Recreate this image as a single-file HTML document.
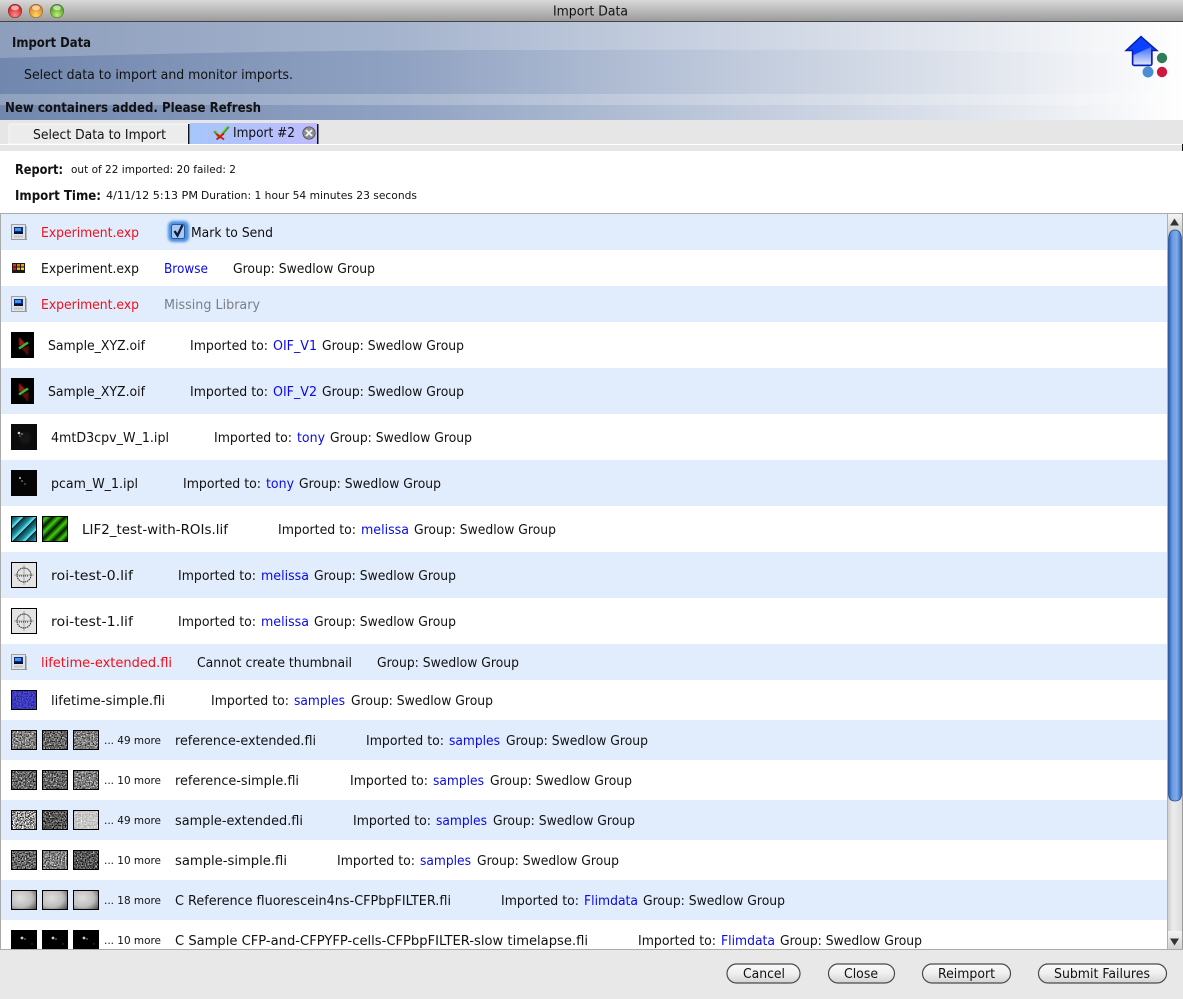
<!DOCTYPE html>
<html><head><meta charset="utf-8"><title>Import Data</title>
<style>
html,body{margin:0;padding:0;background:#fff;width:1183px;height:999px;overflow:hidden}
svg{display:block}
text{font-family:"DejaVu Sans","Liberation Sans",sans-serif;font-size:13px;fill:#111;}
.b{font-weight:bold}
.s{font-size:11px}
.r{fill:#f0101c}.l{fill:#0a0ae6}.g{fill:#7b7f86}
</style></head><body>
<svg width="1183" height="999" viewBox="0 0 1183 999" xmlns="http://www.w3.org/2000/svg">
<defs>
<linearGradient id="tb" x1="0" y1="0" x2="0" y2="1"><stop offset="0" stop-color="#d8d8d8"/><stop offset="1" stop-color="#9c9c9c"/></linearGradient>
<linearGradient id="hd"><stop offset="0" stop-color="#7187ad"/><stop offset=".34" stop-color="#90a2c2"/><stop offset=".6" stop-color="#bcc7da"/><stop offset=".85" stop-color="#e4e8ef"/><stop offset="1" stop-color="#ffffff"/></linearGradient>
<linearGradient id="tab"><stop offset="0" stop-color="#a6c6fb"/><stop offset="1" stop-color="#bfbcfc"/></linearGradient>
<linearGradient id="sb" x1="0" x2="1" y1="0" y2="0"><stop offset="0" stop-color="#2558b0"/><stop offset=".3" stop-color="#6a9ce0"/><stop offset=".65" stop-color="#80ace6"/><stop offset="1" stop-color="#2a60b8"/></linearGradient>
<linearGradient id="tr" x1="0" x2="1" y1="0" y2="0"><stop offset="0" stop-color="#c8c8c8"/><stop offset=".4" stop-color="#ececec"/><stop offset="1" stop-color="#dcdcdc"/></linearGradient>
<linearGradient id="btn" x1="0" y1="0" x2="0" y2="1"><stop offset="0" stop-color="#fafafa"/><stop offset=".5" stop-color="#efefef"/><stop offset="1" stop-color="#d2d2d2"/></linearGradient>
<linearGradient id="ho" x1="0" y1="0" x2="0" y2="1"><stop offset="0" stop-color="#3f6cf5"/><stop offset="1" stop-color="#dbe4ff"/></linearGradient>
<linearGradient id="ub" x1="0" y1="0" x2="0" y2="1"><stop offset="0" stop-color="#f4f4f4"/><stop offset="1" stop-color="#d2d2d2"/></linearGradient>
<radialGradient id="rd" cy=".8" r=".75"><stop offset="0" stop-color="#ff8a8a"/><stop offset="1" stop-color="#d0101a"/></radialGradient>
<radialGradient id="yl" cy=".8" r=".75"><stop offset="0" stop-color="#ffd868"/><stop offset="1" stop-color="#d87010"/></radialGradient>
<radialGradient id="gr" cy=".8" r=".75"><stop offset="0" stop-color="#bcf078"/><stop offset="1" stop-color="#409018"/></radialGradient>
<radialGradient id="fl" cx=".36" cy=".4" r=".85"><stop offset="0" stop-color="#dedede"/><stop offset=".55" stop-color="#bebebe"/><stop offset="1" stop-color="#484848"/></radialGradient>
<linearGradient id="gn" gradientUnits="userSpaceOnUse" x1="0" y1="0" x2="3" y2="3" spreadMethod="reflect"><stop offset="0" stop-color="#021a00"/><stop offset="1" stop-color="#3fcf08"/></linearGradient>
<linearGradient id="cn" gradientUnits="userSpaceOnUse" x1="0" y1="0" x2="6.500" y2="6.500" spreadMethod="repeat"><stop offset="0" stop-color="#05252c"/><stop offset=".7" stop-color="#1f95a5"/><stop offset="1" stop-color="#7cf4ff"/></linearGradient>
<filter id="n1" x="0" y="0" width="100%" height="100%" color-interpolation-filters="sRGB"><feTurbulence type="fractalNoise" baseFrequency=".75" numOctaves="1" seed="3"/><feColorMatrix values="1.200 1.200 0 0 -.7 1.200 1.200 0 0 -.7 1.200 1.200 0 0 -.7 0 0 0 0 1"/></filter>
<filter id="n2" x="0" y="0" width="100%" height="100%" color-interpolation-filters="sRGB"><feTurbulence type="fractalNoise" baseFrequency=".75" numOctaves="1" seed="9"/><feColorMatrix values="1.200 1.200 0 0 -.8 1.200 1.200 0 0 -.8 1.200 1.200 0 0 -.8 0 0 0 0 1"/></filter>
<filter id="n3" x="0" y="0" width="100%" height="100%" color-interpolation-filters="sRGB"><feTurbulence type="fractalNoise" baseFrequency=".75" numOctaves="1" seed="14"/><feColorMatrix values="2.200 2.200 0 0 -1.600 2.200 2.200 0 0 -1.600 2.200 2.200 0 0 -1.600 0 0 0 0 1"/></filter>
<filter id="n4" x="0" y="0" width="100%" height="100%" color-interpolation-filters="sRGB"><feTurbulence type="fractalNoise" baseFrequency=".75" numOctaves="1" seed="21"/><feColorMatrix values="1.200 1.200 0 0 -.87 1.200 1.200 0 0 -.87 1.200 1.200 0 0 -.87 0 0 0 0 1"/></filter>
<filter id="n5" x="0" y="0" width="100%" height="100%" color-interpolation-filters="sRGB"><feTurbulence type="fractalNoise" baseFrequency=".75" numOctaves="1" seed="33"/><feColorMatrix values=".5 .5 0 0 .28 .5 .5 0 0 .28 .5 .5 0 0 .28 0 0 0 0 1"/></filter>
<filter id="nb" x="0" y="0" width="100%" height="100%" color-interpolation-filters="sRGB"><feTurbulence type="fractalNoise" baseFrequency=".8" numOctaves="1" seed="5"/><feColorMatrix values=".7 0 0 0 -.12 .7 0 0 0 -.12 0 .9 0 0 .3 0 0 0 0 1"/></filter>
<filter id="bl" x="-40%" y="-40%" width="180%" height="180%"><feGaussianBlur stdDeviation="1.300"/></filter>
<filter id="bs" x="-30%" y="-30%" width="160%" height="160%"><feGaussianBlur stdDeviation=".6"/></filter>
<symbol id="doc" width="16" height="16" viewBox="0 0 16 16"><rect x=".5" y=".5" width="14" height="15" fill="#e0e3e8" stroke="#a0a0a0"/><rect x="14" y="2" width="1.500" height="14" fill="#8c8c8c"/><rect x="1" y="15" width="15" height="1" fill="#999"/><rect x="3" y="3" width="9" height="7" fill="#0b2a88"/><rect x="4" y="4" width="6" height="3" fill="#3d9ae8"/><rect x="3" y="8" width="9" height="2" fill="#0a1030"/><rect x="3" y="11.500" width="9" height="2" fill="#c4c8cc"/></symbol>
<symbol id="xyz" width="23" height="26" viewBox="0 0 23 26"><rect width="23" height="26" fill="#000"/><path d="M8 5L15 12L8 14Z" fill="#a01212" filter="url(#bs)"/><path d="M10 16L18 14L17 24Z" fill="#5a0808" filter="url(#bs)"/><path d="M8 16.500L17 10.500" stroke="#30c030" stroke-width="2.400"/></symbol>
<symbol id="roi" width="26" height="26" viewBox="0 0 26 26"><rect x=".5" y=".5" width="25" height="25" fill="#e4e4e4" stroke="#000"/><path d="M13 3V23M3 13H23" stroke="#888" stroke-width=".7"/><circle cx="13" cy="13" r="7" fill="none" stroke="#222" stroke-dasharray="1.500 .7"/><path d="M8 14H18" stroke="#333" stroke-dasharray="1 1"/></symbol>
<symbol id="bk" width="26" height="20" viewBox="0 0 26 20"><rect width="26" height="20" fill="#000"/><circle cx="11" cy="8" r="1.400" fill="#ccc"/><circle cx="14" cy="9" r=".9" fill="#777"/><circle cx="21" cy="14" r=".7" fill="#444"/></symbol>
</defs>

<!-- title bar -->
<rect width="1183" height="21" fill="url(#tb)"/>
<rect y="21" width="1183" height="1" fill="#444"/>
<circle cx="15" cy="11" r="6.700" fill="url(#rd)" stroke="#7a2a2a" stroke-width=".6"/>
<ellipse cx="15" cy="7.800" rx="4" ry="2.400" fill="#fff" opacity=".6"/>
<circle cx="36" cy="11" r="6.700" fill="url(#yl)" stroke="#8a6a30" stroke-width=".6"/>
<ellipse cx="36" cy="7.800" rx="4" ry="2.400" fill="#fff" opacity=".6"/>
<circle cx="57" cy="11" r="6.700" fill="url(#gr)" stroke="#4a7a2a" stroke-width=".6"/>
<ellipse cx="57" cy="7.800" rx="4" ry="2.400" fill="#fff" opacity=".6"/>
<text x="553" y="15.500" textLength="75" lengthAdjust="spacingAndGlyphs">Import Data</text>

<!-- header banner -->
<rect y="22" width="1183" height="98" fill="url(#hd)"/>
<path d="M0 58 C150 54 300 50 520 50 C750 50 950 48 1183 56 V22 H0Z" fill="#fff" opacity=".2"/>
<rect y="94" width="1183" height="11" fill="#fff" opacity=".22"/>
<text class="b" x="12" y="47" textLength="79" lengthAdjust="spacingAndGlyphs">Import Data</text>
<text x="24" y="79" textLength="269" lengthAdjust="spacingAndGlyphs">Select data to import and monitor imports.</text>
<text class="b" x="5" y="112" textLength="256" lengthAdjust="spacingAndGlyphs">New containers added. Please Refresh</text>
<path d="M1141 36.500L1126 50.500H1132.500V63.500Q1132.500 65.500 1134.500 65.500H1150Q1152 65.500 1152 63.500V50.500H1157Z" fill="#0a40ff" stroke="#0a1ca8" stroke-width="1.400"/>
<path d="M1133.500 55L1151 47V64.500H1133.500Z" fill="url(#ho)"/>
<circle cx="1162" cy="58" r="5.200" fill="#2f7d58"/>
<circle cx="1148" cy="72" r="5.500" fill="#4a8ed8"/>
<circle cx="1162" cy="72" r="5.200" fill="#d0183e"/>

<!-- tabs -->
<rect y="120" width="1183" height="31" fill="#e6e6e6"/>
<rect y="144" width="1183" height="1" fill="#fff"/>
<rect x="1182" y="144" width="1" height="7" fill="#111"/>
<path d="M9 144V126Q9 124 11 124H188V144Z" fill="#ececec" stroke="#fafafa" stroke-width=".8"/>
<rect x="188" y="124" width="1.500" height="20" fill="#111"/>
<rect x="190" y="123" width="127" height="21" fill="url(#tab)"/>
<rect x="317" y="124" width="1.500" height="20" fill="#111"/>
<text x="33" y="139" textLength="133" lengthAdjust="spacingAndGlyphs">Select Data to Import</text>
<text x="233" y="137" textLength="62" lengthAdjust="spacingAndGlyphs">Import #2</text>
<path d="M214.500 131L219.500 137L228.500 126.500" fill="none" stroke="#3f9a18" stroke-width="2.800"/>
<path d="M215 130.500L219.500 135.500L228 126" fill="none" stroke="#a8e060" stroke-width=".8"/>
<path d="M216.500 134L224 139.500M224 133.500L216.500 139.500" stroke="#d8141c" stroke-width="1.800"/>
<circle cx="309" cy="133" r="6.200" fill="#8d8d8d" stroke="#444" stroke-width=".7"/>
<path d="M306 130L312 136M312 130L306 136" stroke="#f2f2f2" stroke-width="1.900"/>

<!-- report -->
<text class="b" x="15" y="174" textLength="48" lengthAdjust="spacingAndGlyphs">Report:</text>
<text class="s" x="71" y="173" textLength="165" lengthAdjust="spacingAndGlyphs">out of 22 imported: 20 failed: 2</text>
<text class="b" x="15" y="200" textLength="86" lengthAdjust="spacingAndGlyphs">Import Time:</text>
<text class="s" x="106" y="199" textLength="92" lengthAdjust="spacingAndGlyphs">4/11/12 5:13 PM</text>
<text class="s" x="201" y="199" textLength="216" lengthAdjust="spacingAndGlyphs">Duration: 1 hour 54 minutes 23 seconds</text>

<!-- list rows -->
<rect y="213" width="1183" height="1" fill="#aaa"/>
<rect x="1" y="214" width="1166" height="36" fill="#e1ecfd"/>
<rect x="1" y="286" width="1166" height="36" fill="#e1ecfd"/>
<rect x="1" y="368" width="1166" height="46" fill="#e1ecfd"/>
<rect x="1" y="460" width="1166" height="46" fill="#e1ecfd"/>
<rect x="1" y="552" width="1166" height="46" fill="#e1ecfd"/>
<rect x="1" y="644" width="1166" height="36" fill="#e1ecfd"/>
<rect x="1" y="720" width="1166" height="40" fill="#e1ecfd"/>
<rect x="1" y="800" width="1166" height="40" fill="#e1ecfd"/>
<rect x="1" y="880" width="1166" height="40" fill="#e1ecfd"/>

<!-- row 1 -->
<use href="#doc" x="11" y="224"/>
<text class="r" x="41" y="237" textLength="98" lengthAdjust="spacingAndGlyphs">Experiment.exp</text>
<rect x="168" y="221" width="21" height="21" rx="5" fill="#4a8ee0" filter="url(#bl)"/>
<rect x="171.500" y="224.500" width="13" height="14" rx="2" fill="#a9c8f2" stroke="#2a5a9a"/>
<path d="M174.500 231L177.500 235.500L182.500 225" fill="none" stroke="#0c1c3a" stroke-width="2.300"/>
<text x="191" y="237" textLength="82" lengthAdjust="spacingAndGlyphs">Mark to Send</text>
<!-- row 2 -->
<rect x="12" y="263" width="13" height="10" fill="#1a1a1a"/>
<rect x="13" y="264" width="3" height="2.500" fill="#e82c10"/><rect x="17" y="264" width="3" height="2.500" fill="#f06a10"/><rect x="21" y="264" width="3" height="2.500" fill="#f0a010"/>
<rect x="13" y="267.500" width="3" height="2.500" fill="#d81810"/><rect x="17" y="267.500" width="3" height="2.500" fill="#f8b010"/><rect x="21" y="267.500" width="3" height="2.500" fill="#f8d020"/>
<text x="41" y="273" textLength="98" lengthAdjust="spacingAndGlyphs">Experiment.exp</text>
<text class="l" x="164" y="273" textLength="44" lengthAdjust="spacingAndGlyphs">Browse</text>
<text x="233" y="273" textLength="142" lengthAdjust="spacingAndGlyphs">Group: Swedlow Group</text>
<!-- row 3 -->
<use href="#doc" x="11" y="296"/>
<text class="r" x="41" y="309" textLength="98" lengthAdjust="spacingAndGlyphs">Experiment.exp</text>
<text class="g" x="164" y="309" textLength="96" lengthAdjust="spacingAndGlyphs">Missing Library</text>
<!-- row 4 -->
<use href="#xyz" x="11" y="332"/>
<text x="48" y="350" textLength="97" lengthAdjust="spacingAndGlyphs">Sample_XYZ.oif</text>
<text x="190" y="350" textLength="78" lengthAdjust="spacingAndGlyphs">Imported to:</text>
<text class="l" x="273" y="350" textLength="44" lengthAdjust="spacingAndGlyphs">OIF_V1</text>
<text x="322" y="350" textLength="142" lengthAdjust="spacingAndGlyphs">Group: Swedlow Group</text>
<!-- row 5 -->
<use href="#xyz" x="11" y="378"/>
<text x="48" y="396" textLength="97" lengthAdjust="spacingAndGlyphs">Sample_XYZ.oif</text>
<text x="190" y="396" textLength="78" lengthAdjust="spacingAndGlyphs">Imported to:</text>
<text class="l" x="273" y="396" textLength="44" lengthAdjust="spacingAndGlyphs">OIF_V2</text>
<text x="322" y="396" textLength="142" lengthAdjust="spacingAndGlyphs">Group: Swedlow Group</text>
<!-- row 6 -->
<rect x="11" y="424" width="26" height="26" fill="#0c0c0c"/>
<circle cx="19" cy="433" r="1.300" fill="#ddd"/><circle cx="22" cy="434" r=".9" fill="#bbb"/><circle cx="20" cy="436" r=".8" fill="#999"/><circle cx="25" cy="438" r="6" fill="#2a2a2a" opacity=".35" filter="url(#bl)"/>
<text x="51" y="442" textLength="118" lengthAdjust="spacingAndGlyphs">4mtD3cpv_W_1.ipl</text>
<text x="214" y="442" textLength="78" lengthAdjust="spacingAndGlyphs">Imported to:</text>
<text class="l" x="297" y="442" textLength="28" lengthAdjust="spacingAndGlyphs">tony</text>
<text x="330" y="442" textLength="142" lengthAdjust="spacingAndGlyphs">Group: Swedlow Group</text>
<!-- row 7 -->
<rect x="11" y="470" width="26" height="26" fill="#050505"/>
<circle cx="20" cy="478" r="1" fill="#ccc"/><circle cx="22" cy="481" r=".8" fill="#aaa"/><circle cx="25" cy="484" r=".8" fill="#888"/>
<text x="51" y="488" textLength="87" lengthAdjust="spacingAndGlyphs">pcam_W_1.ipl</text>
<text x="183" y="488" textLength="78" lengthAdjust="spacingAndGlyphs">Imported to:</text>
<text class="l" x="266" y="488" textLength="28" lengthAdjust="spacingAndGlyphs">tony</text>
<text x="299" y="488" textLength="142" lengthAdjust="spacingAndGlyphs">Group: Swedlow Group</text>
<!-- row 8 -->
<svg x="11" y="516" width="26" height="26" viewBox="0 0 26 26"><rect width="26" height="26" fill="url(#cn)"/><rect x=".5" y=".5" width="25" height="25" fill="none" stroke="#000"/></svg>
<svg x="42" y="516" width="26" height="26" viewBox="0 0 26 26"><rect width="26" height="26" fill="url(#gn)"/><rect x=".5" y=".5" width="25" height="25" fill="none" stroke="#000"/></svg>
<text x="82" y="534" textLength="146" lengthAdjust="spacingAndGlyphs">LIF2_test-with-ROIs.lif</text>
<text x="278" y="534" textLength="78" lengthAdjust="spacingAndGlyphs">Imported to:</text>
<text class="l" x="361" y="534" textLength="48" lengthAdjust="spacingAndGlyphs">melissa</text>
<text x="414" y="534" textLength="142" lengthAdjust="spacingAndGlyphs">Group: Swedlow Group</text>
<!-- row 9 -->
<use href="#roi" x="11" y="562"/>
<text x="51" y="580" textLength="82" lengthAdjust="spacingAndGlyphs">roi-test-0.lif</text>
<text x="178" y="580" textLength="78" lengthAdjust="spacingAndGlyphs">Imported to:</text>
<text class="l" x="261" y="580" textLength="48" lengthAdjust="spacingAndGlyphs">melissa</text>
<text x="314" y="580" textLength="142" lengthAdjust="spacingAndGlyphs">Group: Swedlow Group</text>
<!-- row 10 -->
<use href="#roi" x="11" y="608"/>
<text x="51" y="626" textLength="82" lengthAdjust="spacingAndGlyphs">roi-test-1.lif</text>
<text x="178" y="626" textLength="78" lengthAdjust="spacingAndGlyphs">Imported to:</text>
<text class="l" x="261" y="626" textLength="48" lengthAdjust="spacingAndGlyphs">melissa</text>
<text x="314" y="626" textLength="142" lengthAdjust="spacingAndGlyphs">Group: Swedlow Group</text>
<!-- row 11 -->
<use href="#doc" x="11" y="654"/>
<text class="r" x="41" y="667" textLength="131" lengthAdjust="spacingAndGlyphs">lifetime-extended.fli</text>
<text x="197" y="667" textLength="155" lengthAdjust="spacingAndGlyphs">Cannot create thumbnail</text>
<text x="377" y="667" textLength="142" lengthAdjust="spacingAndGlyphs">Group: Swedlow Group</text>
<!-- row 12 -->
<rect x="11" y="690" width="26" height="20" filter="url(#nb)"/><rect x="11.500" y="690.500" width="25" height="19" fill="none" stroke="#000"/>
<text x="51" y="705" textLength="114" lengthAdjust="spacingAndGlyphs">lifetime-simple.fli</text>
<text x="211" y="705" textLength="78" lengthAdjust="spacingAndGlyphs">Imported to:</text>
<text class="l" x="294" y="705" textLength="51" lengthAdjust="spacingAndGlyphs">samples</text>
<text x="351" y="705" textLength="142" lengthAdjust="spacingAndGlyphs">Group: Swedlow Group</text>
<!-- row 13 -->
<rect x="11" y="730" width="26" height="20" filter="url(#n1)"/><rect x="42" y="730" width="26" height="20" filter="url(#n2)"/><rect x="73" y="730" width="26" height="20" filter="url(#n1)"/>
<path d="M11.500 730.500h25v19h-25zM42.500 730.500h25v19h-25zM73.500 730.500h25v19h-25z" fill="none" stroke="#000"/>
<text class="s" x="104" y="744" textLength="57" lengthAdjust="spacingAndGlyphs">... 49 more</text>
<text x="175" y="745" textLength="141" lengthAdjust="spacingAndGlyphs">reference-extended.fli</text>
<text x="366" y="745" textLength="78" lengthAdjust="spacingAndGlyphs">Imported to:</text>
<text class="l" x="449" y="745" textLength="51" lengthAdjust="spacingAndGlyphs">samples</text>
<text x="506" y="745" textLength="142" lengthAdjust="spacingAndGlyphs">Group: Swedlow Group</text>
<!-- row 14 -->
<rect x="11" y="770" width="26" height="20" filter="url(#n2)"/><rect x="42" y="770" width="26" height="20" filter="url(#n2)"/><rect x="73" y="770" width="26" height="20" filter="url(#n1)"/>
<path d="M11.500 770.500h25v19h-25zM42.500 770.500h25v19h-25zM73.500 770.500h25v19h-25z" fill="none" stroke="#000"/>
<text class="s" x="104" y="784" textLength="57" lengthAdjust="spacingAndGlyphs">... 10 more</text>
<text x="175" y="785" textLength="124" lengthAdjust="spacingAndGlyphs">reference-simple.fli</text>
<text x="350" y="785" textLength="78" lengthAdjust="spacingAndGlyphs">Imported to:</text>
<text class="l" x="433" y="785" textLength="51" lengthAdjust="spacingAndGlyphs">samples</text>
<text x="490" y="785" textLength="142" lengthAdjust="spacingAndGlyphs">Group: Swedlow Group</text>
<!-- row 15 -->
<rect x="11" y="810" width="26" height="20" filter="url(#n3)"/><rect x="42" y="810" width="26" height="20" filter="url(#n4)"/><rect x="73" y="810" width="26" height="20" filter="url(#n5)"/>
<path d="M11.500 810.500h25v19h-25zM42.500 810.500h25v19h-25zM73.500 810.500h25v19h-25z" fill="none" stroke="#000"/>
<text class="s" x="104" y="824" textLength="57" lengthAdjust="spacingAndGlyphs">... 49 more</text>
<text x="175" y="825" textLength="128" lengthAdjust="spacingAndGlyphs">sample-extended.fli</text>
<text x="353" y="825" textLength="78" lengthAdjust="spacingAndGlyphs">Imported to:</text>
<text class="l" x="436" y="825" textLength="51" lengthAdjust="spacingAndGlyphs">samples</text>
<text x="493" y="825" textLength="142" lengthAdjust="spacingAndGlyphs">Group: Swedlow Group</text>
<!-- row 16 -->
<rect x="11" y="850" width="26" height="20" filter="url(#n2)"/><rect x="42" y="850" width="26" height="20" filter="url(#n1)"/><rect x="73" y="850" width="26" height="20" filter="url(#n4)"/>
<path d="M11.500 850.500h25v19h-25zM42.500 850.500h25v19h-25zM73.500 850.500h25v19h-25z" fill="none" stroke="#000"/>
<text class="s" x="104" y="864" textLength="57" lengthAdjust="spacingAndGlyphs">... 10 more</text>
<text x="175" y="865" textLength="112" lengthAdjust="spacingAndGlyphs">sample-simple.fli</text>
<text x="337" y="865" textLength="78" lengthAdjust="spacingAndGlyphs">Imported to:</text>
<text class="l" x="420" y="865" textLength="51" lengthAdjust="spacingAndGlyphs">samples</text>
<text x="477" y="865" textLength="142" lengthAdjust="spacingAndGlyphs">Group: Swedlow Group</text>
<!-- row 17 -->
<rect x="11.500" y="890.500" width="25" height="19" fill="url(#fl)" stroke="#000"/><rect x="42.500" y="890.500" width="25" height="19" fill="url(#fl)" stroke="#000"/><rect x="73.500" y="890.500" width="25" height="19" fill="url(#fl)" stroke="#000"/>
<text class="s" x="104" y="904" textLength="57" lengthAdjust="spacingAndGlyphs">... 18 more</text>
<text x="175" y="905" textLength="276" lengthAdjust="spacingAndGlyphs">C Reference fluorescein4ns-CFPbpFILTER.fli</text>
<text x="501" y="905" textLength="78" lengthAdjust="spacingAndGlyphs">Imported to:</text>
<text class="l" x="584" y="905" textLength="54" lengthAdjust="spacingAndGlyphs">Flimdata</text>
<text x="643" y="905" textLength="142" lengthAdjust="spacingAndGlyphs">Group: Swedlow Group</text>
<!-- row 18 -->
<use href="#bk" x="11" y="930"/><use href="#bk" x="42" y="930"/><use href="#bk" x="73" y="930"/>
<text class="s" x="104" y="944" textLength="57" lengthAdjust="spacingAndGlyphs">... 10 more</text>
<text x="175" y="945" textLength="413" lengthAdjust="spacingAndGlyphs">C Sample CFP-and-CFPYFP-cells-CFPbpFILTER-slow timelapse.fli</text>
<text x="638" y="945" textLength="78" lengthAdjust="spacingAndGlyphs">Imported to:</text>
<text class="l" x="721" y="945" textLength="54" lengthAdjust="spacingAndGlyphs">Flimdata</text>
<text x="780" y="945" textLength="142" lengthAdjust="spacingAndGlyphs">Group: Swedlow Group</text>

<!-- scrollbar -->
<rect x="1167" y="214" width="15" height="735" fill="url(#tr)"/>
<rect x="1167" y="214" width="1" height="735" fill="#b0b0b0"/>
<rect x="1182" y="213" width="1" height="737" fill="#9a9a9a"/>
<rect x="1168" y="214" width="14" height="18" fill="url(#ub)"/>
<path d="M1174.500 218.500L1179 225.500H1170Z" fill="#333"/>
<path d="M1168.500 240Q1168.500 230 1175 230Q1181.500 230 1181.500 240V794Q1181.500 801 1175 801Q1168.500 801 1168.500 794Z" fill="url(#sb)" stroke="#1f4f9f" stroke-width=".8"/>
<rect x="1168" y="931" width="14" height="18" fill="url(#ub)"/>
<path d="M1174.500 945.500L1170 938.500H1179Z" fill="#333"/>

<!-- left border + footer -->
<rect y="213" width="1" height="737" fill="#aaa"/>
<rect y="950" width="1183" height="49" fill="#e8e8e8"/>
<rect y="949" width="1183" height="1" fill="#aaa"/>
<g fill="url(#btn)" stroke="#4a4a4a" stroke-width="1.200">
<rect x="727" y="964" width="73" height="19" rx="9.500"/>
<rect x="828.500" y="964" width="66" height="19" rx="9.500"/>
<rect x="922.500" y="964" width="88" height="19" rx="9.500"/>
<rect x="1038.500" y="964" width="128" height="19" rx="9.500"/>
</g>
<text x="743" y="978" textLength="42" lengthAdjust="spacingAndGlyphs">Cancel</text>
<text x="844" y="978" textLength="34" lengthAdjust="spacingAndGlyphs">Close</text>
<text x="938" y="978" textLength="57" lengthAdjust="spacingAndGlyphs">Reimport</text>
<text x="1054" y="978" textLength="96" lengthAdjust="spacingAndGlyphs">Submit Failures</text>
</svg>
</body></html>
